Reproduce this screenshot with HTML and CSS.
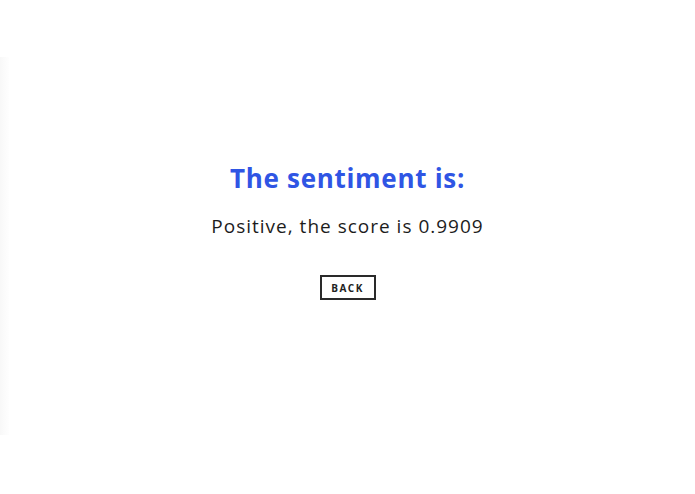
FILE: index.html
```html
<!DOCTYPE html>
<html lang="en">
<head>
<meta charset="utf-8">
<title>Sentiment result</title>
<link rel="stylesheet" href="styles.css">
</head>
<body>
  <div class="edge"></div>
  <main class="result">
    <h1 class="result-title">The sentiment is:</h1>
    <p class="result-text">Positive, the score is 0.9909</p>
    <a class="btn-back" href="#">BACK</a>
  </main>
</body>
</html>
```

FILE: styles.css
```css
html, body {
  margin: 0;
  padding: 0;
  height: 100%;
  background: #ffffff;
}

body {
  font-family: "Open Sans", "DejaVu Sans", sans-serif;
  color: #1f1f1f;
  position: relative;
}

/* faint strip along the left side of the page */
.edge {
  position: absolute;
  left: 0;
  top: 57px;
  width: 9px;
  height: 378px;
  background: linear-gradient(to right, #f8f8f8, #fefefe);
}

.result {
  display: flex;
  flex-direction: column;
  align-items: center;
  padding-top: 161px;
}

.result-title {
  margin: 0;
  font-size: 26px;
  font-weight: 700;
  letter-spacing: 0.7px;
  color: #2f55e4;
  line-height: 34px;
}

.result-text {
  margin: 18px 0 0;
  font-size: 19px;
  font-weight: 400;
  letter-spacing: 1px;
  line-height: 26px;
  color: #1c1c1c;
}

.btn-back {
  margin-top: 36px;
  display: flex;
  align-items: center;
  justify-content: center;
  width: 52px;
  height: 21px;
  border: 2px solid #2a2a2a;
  font-size: 10px;
  font-weight: 700;
  letter-spacing: 1.5px;
  color: #222;
  text-decoration: none;
}
```
